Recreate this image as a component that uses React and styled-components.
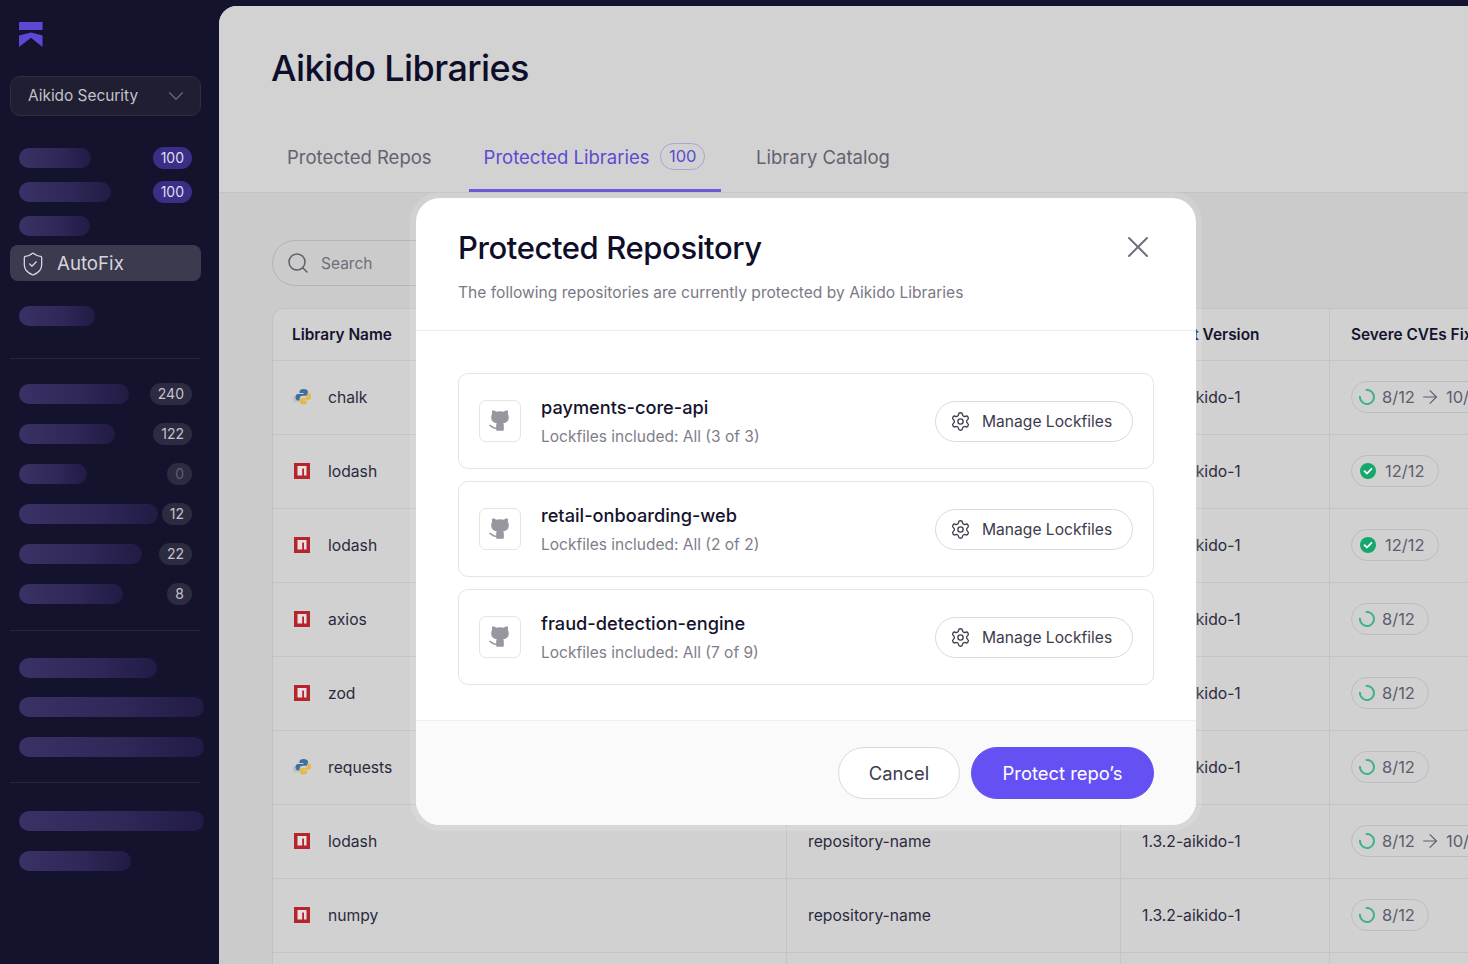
import React from "react";
import styled, { createGlobalStyle } from "styled-components";
import { ChevronDown, ShieldCheck, Search, Settings, X, ArrowRight } from "lucide-react";

const Global = createGlobalStyle`
  html, body { margin: 0; padding: 0; height: 100%; overflow: hidden; }
  body { font-family: Inter, "Liberation Sans", sans-serif; background: #14132e; }
  * { box-sizing: border-box; }
`;

const Page = styled.div`
  display: flex;
  width: 1468px;
  height: 964px;
  overflow: hidden;
  background: #14132e;
`;

const Sidebar = styled.aside`
  width: 219px;
  flex: none;
  padding: 22px 18px 0 10px;
  display: flex;
  flex-direction: column;
`;

const LogoWrap = styled.div`
  height: 26px;
  padding-left: 9px;
  margin-bottom: 28px;
  svg { display: block; }
`;

const OrgSelect = styled.div`
  height: 40px;
  width: 191px;
  flex: none;
  border-radius: 10px;
  background: #1f1e33;
  border: 1px solid #2e2d42;
  color: #c3c2ca;
  font-size: 15.4px;
  display: flex;
  align-items: center;
  justify-content: space-between;
  padding: 0 11px 1px 17px;
  svg { color: #6c6b7c; }
`;

const NavGroup = styled.div`
  display: flex;
  flex-direction: column;
  margin-top: ${p => p.$top}px;
`;

const NavRow = styled.div`
  height: ${p => p.$h}px;
  display: flex;
  align-items: center;
  justify-content: space-between;
  padding: 0 9px 0 9px;
  width: 191px;
`;

const Pill = styled.div`
  height: 20px;
  flex: none;
  border-radius: 10px;
  background: linear-gradient(90deg, #3a3166 0%, #2e2757 60%, #211b45 100%);
`;

const Count = styled.span`
  height: 22px;
  min-width: 22px;
  padding: 0 8px;
  border-radius: 11px;
  background: ${p => (p.$accent ? "#3a2f86" : "#2d2b41")};
  color: ${p => (p.$muted ? "#5f5e70" : p.$accent ? "#dedcf0" : "#c4c3cb")};
  font-size: 14px;
  line-height: 22px;
  text-align: center;
`;

const ActiveItem = styled.div`
  height: 36px;
  width: 191px;
  margin: 2px 0 1px;
  border-radius: 8px;
  background: #3c3a4f;
  color: #d6d5db;
  font-size: 18.700px;
  display: flex;
  align-items: center;
  gap: 11px;
  padding: 1px 0 0 10px;
`;

const Rule = styled.div`
  height: 1px;
  width: 191px;
  background: #25243a;
  margin-top: ${p => p.$top}px;
`;

const Main = styled.main`
  position: relative;
  flex: 1;
  margin-top: 6px;
  background: #cbcbcc;
  border-top-left-radius: 18px;
  overflow: hidden;
  display: flex;
  flex-direction: column;
  min-width: 0;
`;

const Header = styled.header`
  height: 187px;
  flex: none;
  background: #d2d2d3;
  border-bottom: 1px solid #c3c3c5;
  padding: 37px 0 0 52px;
  display: flex;
  flex-direction: column;
`;

const Title = styled.h1`
  margin: 0;
  font-size: 36px;
  line-height: 50px;
  font-weight: 500;
  letter-spacing: -0.600px;
  color: #0f0e2a;
`;

const Tabs = styled.nav`
  display: flex;
  gap: 20px;
  margin-top: 32px;
  margin-left: 1px;
`;

const Tab = styled.div`
  height: 67px;
  padding: 0 16px 0 15px;
  display: flex;
  align-items: center;
  gap: 11px;
  font-size: 18.500px;
  color: ${p => (p.$active ? "#5b4bd0" : "#636270")};
  border-bottom: 3px solid ${p => (p.$active ? "#6a5ad8" : "transparent")};
  &:first-child { padding-right: 17px; }
`;

const TabCount = styled.span`
  height: 27px;
  padding: 0 7.500px;
  border-radius: 14px;
  border: 1px solid #a9a3d6;
  font-size: 16.500px;
  line-height: 24px;
  margin-top: -2px;
`;

const Content = styled.div`
  padding: 47px 0 0 53px;
  display: flex;
  flex-direction: column;
  gap: 22px;
`;

const SearchBox = styled.div`
  width: 320px;
  height: 46px;
  border-radius: 23px;
  border: 1px solid #b3b3b8;
  display: flex;
  align-items: center;
  gap: 11px;
  padding-left: 13px;
  font-size: 15.500px;
  color: #6f6e7b;
  svg { color: #5e5d6b; }
`;

const Table = styled.div`
  width: 1300px;
  border: 1px solid #c2c2c4;
  border-bottom: 0;
  border-top-left-radius: 12px;
  background: #d1d1d2;
  overflow: hidden;
`;

const Row = styled.div`
  display: grid;
  grid-template-columns: 513px 334px 209px 1fr;
  height: ${p => (p.$head ? 52 : 74)}px;
  border-bottom: 1px solid #c4c4c6;
`;

const Cell = styled.div`
  display: flex;
  align-items: center;
  gap: 16px;
  padding: 0 0 1px 21px;
  font-size: ${p => (p.$head ? 15.4 : 15.7)}px;
  color: ${p => (p.$head ? "#14132e" : "#2b2a3d")};
  font-weight: ${p => (p.$head ? 600 : 400)};
  white-space: nowrap;
  & + & { border-left: 1px solid #c4c4c6; }
`;

const NameCell = styled(Cell)`
  padding-left: ${p => (p.$head ? 19 : 20)}px;
`;

const CveChip = styled.div`
  height: 32px;
  padding: 0 13px 0 ${p => (p.$done ? 7 : 6)}px;
  border-radius: 16px;
  border: 1px solid #bdbdc1;
  display: flex;
  align-items: center;
  gap: ${p => (p.$done ? 8 : 6)}px;
  font-size: 16.500px;
  color: #5e5d6d;
  svg { flex: none; }
`;

const ChipArrow = styled(ArrowRight)`
  margin: 0 -1.400px 0 -1.600px;
`;

const Modal = styled.section`
  position: absolute;
  left: 197px;
  top: 192px;
  width: 780px;
  height: 627px;
  background: #fff;
  border-radius: 24px;
  box-shadow: 0 0 0 6px rgba(255, 255, 255, 0.13);
  display: flex;
  flex-direction: column;
`;

const ModalHead = styled.div`
  position: relative;
  height: 133px;
  flex: none;
  border-bottom: 1px solid #ececef;
  padding: 29px 42px 0;
`;

const ModalTitle = styled.h2`
  margin: 0;
  font-size: 31px;
  line-height: 42px;
  font-weight: 500;
  letter-spacing: -0.400px;
  color: #0f0e2a;
`;

const ModalSub = styled.p`
  margin: 12px 0 0;
  font-size: 15.600px;
  line-height: 24px;
  color: #7a7986;
`;

const CloseBtn = styled.button`
  position: absolute;
  right: 40px;
  top: 31px;
  width: 36px;
  height: 36px;
  padding: 0;
  border: 0;
  background: none;
  color: #6f6e7d;
  display: flex;
  align-items: center;
  justify-content: center;
`;

const ModalBody = styled.div`
  flex: 1;
  padding: 42px 42px 0;
  display: flex;
  flex-direction: column;
  gap: 12px;
`;

const RepoCard = styled.article`
  height: 96px;
  border: 1px solid #e4e4e9;
  border-radius: 10px;
  display: flex;
  align-items: center;
  padding: 0 20px;
`;

const RepoIcon = styled.div`
  width: 42px;
  height: 42px;
  flex: none;
  border: 1px solid #e4e4e9;
  border-radius: 7px;
  display: flex;
  align-items: center;
  justify-content: center;
`;

const RepoText = styled.div`
  flex: 1;
  margin-left: 20px;
  padding-top: 1px;
`;

const RepoName = styled.div`
  font-size: 18.200px;
  line-height: 26px;
  font-weight: 500;
  color: #14132e;
`;

const RepoMeta = styled.div`
  margin-top: 5px;
  font-size: 15.500px;
  line-height: 24px;
  color: #7e7d8a;
`;

const LockBtn = styled.button`
  height: 41px;
  width: 198px;
  border: 1px solid #d9d9e1;
  border-radius: 21px;
  background: #fff;
  display: flex;
  align-items: center;
  gap: 11px;
  padding: 0 0 0 14px;
  font: 400 15.600px Inter, sans-serif;
  color: #3d3c4d;
  svg { color: #3d3c4d; }
`;

const ModalFoot = styled.footer`
  height: 105px;
  flex: none;
  background: #fafafb;
  border-top: 1px solid #efeff2;
  border-radius: 0 0 24px 24px;
  display: flex;
  justify-content: flex-end;
  align-items: center;
  gap: 11px;
  padding: 0 42px 0 0;
`;

const Btn = styled.button`
  height: 52px;
  width: ${p => p.$w}px;
  border-radius: 26px;
  border: 1px solid ${p => (p.$primary ? "#6551f3" : "#d9d9e1")};
  background: ${p => (p.$primary ? "#6551f3" : "#fff")};
  color: ${p => (p.$primary ? "#fff" : "#3d3c4d")};
  font: 400 18.400px Inter, sans-serif;
  padding: 0 0 1px;
`;

const Logo = () => (
  <svg width="24" height="26" viewBox="0 0 24 26" fill="#5b49d6">
    <rect x="0" y="0" width="23.500" height="8" />
    <path d="M12 10.500 23.500 13.500V25L12 15.700 0 25V13.500z" />
  </svg>
);

const GithubCat = () => (
  <svg width="24" height="24" viewBox="0 0 24 24" fill="#98979f" stroke="#98979f" strokeWidth="1.6" strokeLinecap="round" strokeLinejoin="round">
    <path d="M15 21v-5a4 4 0 0 0-1-2.500c3 0 6-1.500 6-5 .08-1.250-.27-2.480-1-3.500.28-1 .28-2 0-3 0 0-1 0-3 1.500-2.640-.5-5.360-.5-8 0C6 2 5 2 5 2c-.3 1-.3 2 0 3a5.400 5.400 0 0 0-1 3.500c0 3.500 3 5 6 5-.6.800-1 1.600-1 2.500v5z" />
    <path d="M9 19c-4 1.500-5-2-7-2.500" fill="none" />
  </svg>
);

const PythonMark = () => (
  <svg width="19" height="18" viewBox="0 0 19 18">
    <ellipse cx="3" cy="11" rx="3" ry="3.500" fill="#c0c0c2" />
    <path fill="#3d6fa3" d="M10.500 1C8 1 6.500 2 6.500 3.500V5h4v1H5C3.500 6 2.500 7.300 2.500 9.200s1 3.300 2.600 3.300h1.600v-2c0-1.500 1.200-2.700 2.800-2.700h3.300c1.200 0 2.200-1 2.200-2.200V3.500C15 2 13 1 10.500 1z" />
    <path fill="#e0bb4b" d="M10.500 16.500c2.500 0 3.500-1 3.500-2.500v-1.500h-4v-.7h5.700c1.400 0 2.300-1.300 2.300-3.300s-.8-3.300-2.200-3.300h-1.600v2c0 1.500-1.200 2.700-2.800 2.700H8.600c-1.200 0-2.100 1-2.100 2.200V14c0 1.500 1.500 2.500 4 2.500z" />
  </svg>
);

const NpmMark = () => (
  <svg width="19" height="18" viewBox="0 0 19 18">
    <rect width="16" height="16" x="1" y="1" fill="#b4262c" />
    <path fill="#e8e0e0" d="M4.500 4h9v9.500H11V6.500H9.200v7H4.500z" />
  </svg>
);

const Ring = () => (
  <svg width="18" height="18" viewBox="0 0 18 18" fill="none">
    <circle cx="9" cy="9" r="7" stroke="#3fb28a" strokeWidth="2" strokeDasharray="35 9" transform="rotate(-100 9 9)" />
  </svg>
);

const Done = () => (
  <svg width="18" height="18" viewBox="0 0 18 18">
    <circle cx="9" cy="9" r="8" fill="#14a86b" />
    <path d="M5.500 9.200 8 11.500 12.500 6.800" fill="none" stroke="#fff" strokeWidth="1.800" strokeLinecap="round" strokeLinejoin="round" />
  </svg>
);

const libs = [
  { name: "chalk", kind: "py", cve: "8/12", next: "10/12" },
  { name: "lodash", kind: "npm", cve: "12/12", done: true },
  { name: "lodash", kind: "npm", cve: "12/12", done: true },
  { name: "axios", kind: "npm", cve: "8/12" },
  { name: "zod", kind: "npm", cve: "8/12" },
  { name: "requests", kind: "py", cve: "8/12" },
  { name: "lodash", kind: "npm", cve: "8/12", next: "10/12" },
  { name: "numpy", kind: "npm", cve: "8/12" },
  { name: "lodash", kind: "npm", cve: "8/12" },
];

const repos = [
  { name: "payments-core-api", meta: "Lockfiles included: All (3 of 3)" },
  { name: "retail-onboarding-web", meta: "Lockfiles included: All (2 of 2)" },
  { name: "fraud-detection-engine", meta: "Lockfiles included: All (7 of 9)" },
];

const nav1 = [[72, "100"], [92, "100"], [71]];
const nav2 = [[110, "240"], [96, "122"], [68, "0"], [139, "12"], [123, "22"], [104, "8"]];

export default function App() {
  return (
    <Page>
      <Global />
      <Sidebar>
        <LogoWrap><Logo /></LogoWrap>
        <OrgSelect>
          Aikido Security
          <ChevronDown size={26} strokeWidth={1.1} />
        </OrgSelect>
        <NavGroup $top={25}>
          {nav1.map(([w, c], i) => (
            <NavRow key={i} $h={34}>
              <Pill style={{ width: w }} />
              {c && <Count $accent>{c}</Count>}
            </NavRow>
          ))}
        </NavGroup>
        <ActiveItem>
          <ShieldCheck size={26} strokeWidth={1.2} />
          AutoFix
        </ActiveItem>
        <NavGroup $top={24}>
          <NavRow $h={20}><Pill style={{ width: 76 }} /></NavRow>
        </NavGroup>
        <Rule $top={32} />
        <NavGroup $top={15}>
          {nav2.map(([w, c]) => (
            <NavRow key={c} $h={40}>
              <Pill style={{ width: w }} />
              <Count $muted={c === "0"}>{c}</Count>
            </NavRow>
          ))}
        </NavGroup>
        <Rule $top={16} />
        <NavGroup $top={17}>
          {[138, 185, 185].map((w, i) => (
            <NavRow key={i} $h={39.500}><Pill style={{ width: w }} /></NavRow>
          ))}
        </NavGroup>
        <Rule $top={15} />
        <NavGroup $top={18}>
          {[185, 112].map((w, i) => (
            <NavRow key={i} $h={40}><Pill style={{ width: w }} /></NavRow>
          ))}
        </NavGroup>
      </Sidebar>
      <Main>
        <Header>
          <Title>Aikido Libraries</Title>
          <Tabs>
            <Tab>Protected Repos</Tab>
            <Tab $active>Protected Libraries <TabCount>100</TabCount></Tab>
            <Tab>Library Catalog</Tab>
          </Tabs>
        </Header>
        <Content>
          <SearchBox>
            <Search size={24} strokeWidth={1.500} />
            Search
          </SearchBox>
          <Table>
            <Row $head>
              <NameCell $head>Library Name</NameCell>
              <Cell $head>Repository</Cell>
              <Cell $head>Current Version</Cell>
              <Cell $head>Severe CVEs Fixed</Cell>
            </Row>
            {libs.map((l, i) => (
              <Row key={i}>
                <NameCell>
                  {l.kind === "py" ? <PythonMark /> : <NpmMark />}
                  {l.name}
                </NameCell>
                <Cell>repository-name</Cell>
                <Cell>1.3.2-aikido-1</Cell>
                <Cell>
                  <CveChip $done={l.done}>
                    {l.done ? <Done /> : <Ring />}
                    {l.cve}
                    {l.next && <ChipArrow size={22} strokeWidth={1.200} />}
                    {l.next}
                  </CveChip>
                </Cell>
              </Row>
            ))}
          </Table>
        </Content>
        <Modal>
          <ModalHead>
            <ModalTitle>Protected Repository</ModalTitle>
            <ModalSub>The following repositories are currently protected by Aikido Libraries</ModalSub>
            <CloseBtn aria-label="Close"><X size={36} strokeWidth={1.300} /></CloseBtn>
          </ModalHead>
          <ModalBody>
            {repos.map(r => (
              <RepoCard key={r.name}>
                <RepoIcon><GithubCat /></RepoIcon>
                <RepoText>
                  <RepoName>{r.name}</RepoName>
                  <RepoMeta>{r.meta}</RepoMeta>
                </RepoText>
                <LockBtn><Settings size={21} strokeWidth={1.500} />Manage Lockfiles</LockBtn>
              </RepoCard>
            ))}
          </ModalBody>
          <ModalFoot>
            <Btn $w={122}>Cancel</Btn>
            <Btn $primary $w={183}>Protect repo’s</Btn>
          </ModalFoot>
        </Modal>
      </Main>
    </Page>
  );
}
